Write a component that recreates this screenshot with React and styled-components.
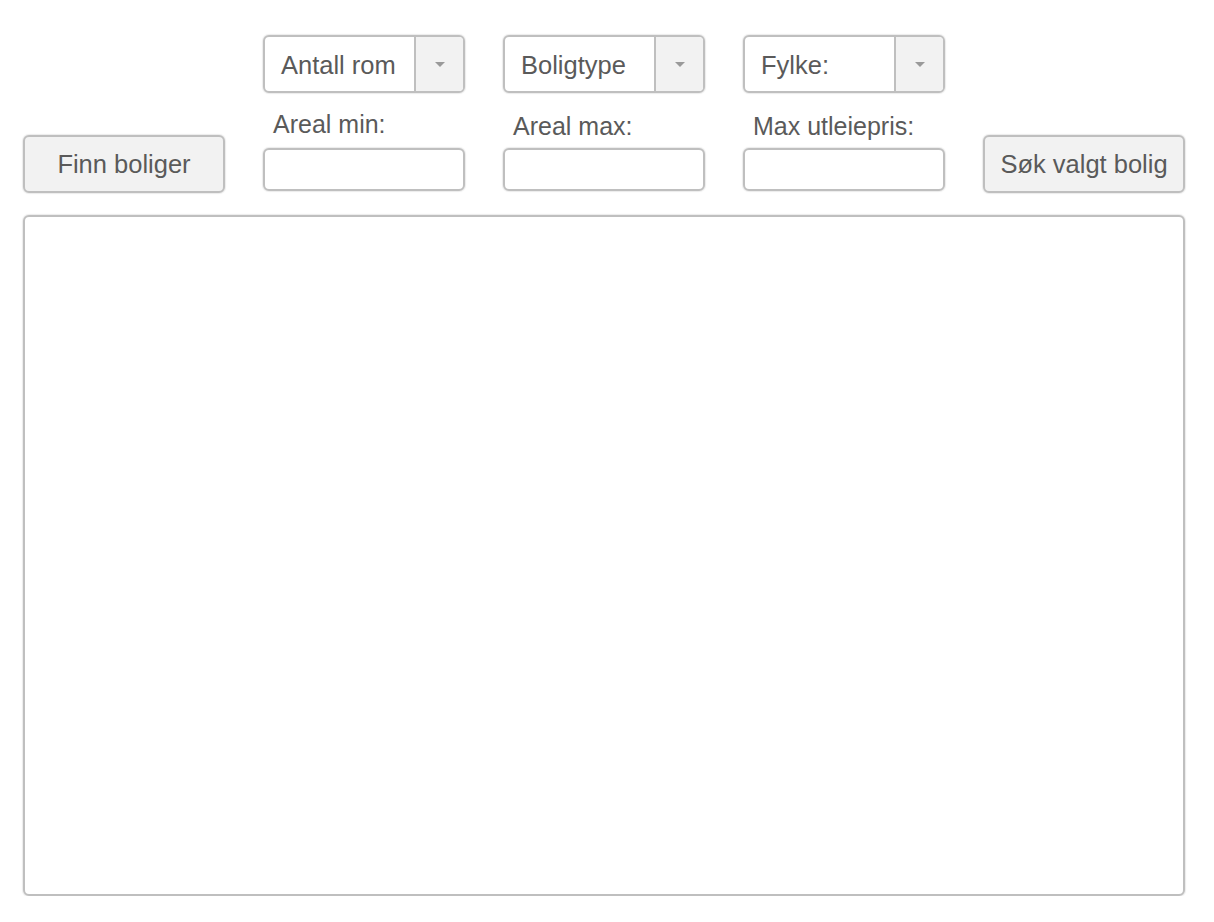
import React from 'react';
import styled, { createGlobalStyle } from 'styled-components';

const GlobalStyle = createGlobalStyle`
  body {
    margin: 0;
    background: #ffffff;
    font-family: "Liberation Sans", Arial, Helvetica, sans-serif;
    color: #5a5a5a;
  }
`;

const Page = styled.div`
  padding: 35px 0 0 23px;
  width: 1162px;
`;

const ControlGrid = styled.div`
  display: grid;
  grid-template-columns: repeat(5, 202px);
  column-gap: 38px;
  row-gap: 16px;
  align-items: end;
`;

const frame = `
  box-sizing: border-box;
  border: 2px solid #bfbfbf;
  border-radius: 6px;
  box-shadow: 0 0 1px 1px rgba(0, 0, 0, 0.08);
`;

const Select = styled.div`
  ${frame}
  grid-column: ${({ $col }) => $col};
  grid-row: 1;
  height: 58px;
  display: flex;
  align-items: stretch;
  background: #ffffff;
  overflow: hidden;
`;

const SelectValue = styled.div`
  flex: 1;
  display: flex;
  align-items: center;
  padding: 3px 0 0 16px;
  font-size: 25.5px;
`;

const SelectArrow = styled.div`
  width: 47px;
  border-left: 2px solid #bfbfbf;
  background: #f2f2f2;
  display: flex;
  align-items: center;
  justify-content: center;

  &::after {
    content: '';
    border-left: 5px solid transparent;
    border-right: 5px solid transparent;
    border-top: 5px solid #9a9a9a;
  }
`;

const Button = styled.button`
  ${frame}
  grid-column: ${({ $col }) => $col};
  grid-row: 2;
  height: 58px;
  width: 202px;
  background: #f2f2f2;
  color: #5a5a5a;
  font-family: inherit;
  font-size: 25.5px;
  padding: 0;
`;

const Field = styled.div`
  grid-column: ${({ $col }) => $col};
  grid-row: 2;
  display: flex;
  flex-direction: column;
  padding-bottom: 2px;
`;

const Label = styled.label`
  font-size: 25px;
  line-height: 30px;
  padding-left: 10px;
  margin-bottom: ${({ $raised }) => ($raised ? '9px' : '7px')};
`;

const Input = styled.div`
  ${frame}
  height: 43px;
  background: #ffffff;
`;

const ResultPanel = styled.div`
  ${frame}
  margin-top: 22px;
  height: 681px;
  background: #ffffff;
`;

const selects = ['Antall rom', 'Boligtype', 'Fylke:'];
const fields = [
  { label: 'Areal min:', raised: true },
  { label: 'Areal max:' },
  { label: 'Max utleiepris:' },
];

export default function App() {
  return (
    <>
      <GlobalStyle />
      <Page>
        <ControlGrid>
          {selects.map((s, i) => (
            <Select key={s} $col={i + 2}>
              <SelectValue>{s}</SelectValue>
              <SelectArrow />
            </Select>
          ))}
          <Button $col={1}>Finn boliger</Button>
          {fields.map((f, i) => (
            <Field key={f.label} $col={i + 2}>
              <Label $raised={f.raised}>{f.label}</Label>
              <Input />
            </Field>
          ))}
          <Button $col={5}>Søk valgt bolig</Button>
        </ControlGrid>
        <ResultPanel />
      </Page>
    </>
  );
}
